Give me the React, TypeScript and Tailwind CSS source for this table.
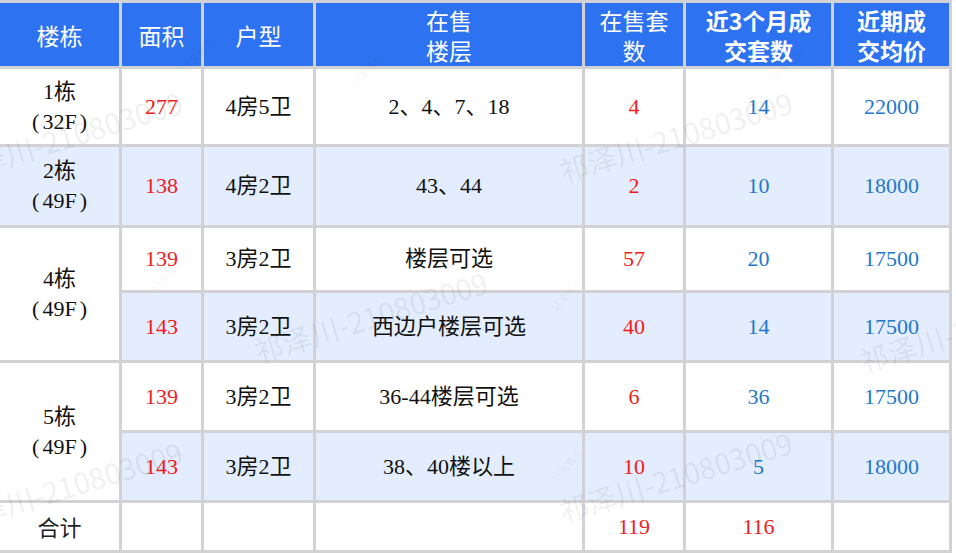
import React from 'react';

const serif = { fontFamily: '"Liberation Serif", "Noto Sans CJK SC", serif' };
const sans = { fontFamily: '"Noto Sans CJK SC", "Liberation Sans", sans-serif' };

const RED = 'text-[#f01c1c]';
const BLUE = 'text-[#1f78cc]';

type Row = {
  area: string;
  type: string;
  floors: string;
  onSale: string;
  sold: string;
  price: string;
  tint: boolean;
  h: string;
};

const Cell = ({ children, className = '' }: { children?: React.ReactNode; className?: string }) => (
  <div className={`flex items-center justify-center text-center text-[22px] leading-[30px] ${className}`} style={serif}>
    {children}
  </div>
);

const Building = ({ name, floors, span }: { name: string; floors: string; span: string }) => (
  <div className={`bg-white flex flex-col items-center justify-center text-[22px] leading-[30px] text-[#111] ${span}`} style={serif}>
    <span>{name}</span>
    <span>
      <span className="pr-[3px]">(</span>
      {floors}
      <span className="pl-[3px]">)</span>
    </span>
  </div>
);

const DataCells = ({ r }: { r: Row }) => {
  const bg = r.tint ? 'bg-[#e3edfd]' : 'bg-white';
  return (
    <>
      <Cell className={`${bg} ${RED}`}>{r.area}</Cell>
      <Cell className={`${bg} text-[#111]`}>{r.type}</Cell>
      <Cell className={`${bg} text-[#111]`}>{r.floors}</Cell>
      <Cell className={`${bg} ${RED}`}>{r.onSale}</Cell>
      <Cell className={`${bg} ${BLUE}`}>{r.sold}</Cell>
      <Cell className={`${bg} ${BLUE}`}>{r.price}</Cell>
    </>
  );
};

const Watermark = ({ x, y }: { x: number; y: number }) => (
  <div
    className="absolute pointer-events-none whitespace-nowrap text-[29px] text-black/[0.07] origin-left -rotate-[17deg]"
    style={{ ...sans, left: x, top: y }}
  >
    祁泽川-210803009
  </div>
);

const Tag = ({ x, y }: { x: number; y: number }) => (
  <div
    className="absolute pointer-events-none whitespace-nowrap text-[10px] text-black/[0.06] -rotate-45"
    style={{ ...sans, left: x, top: y }}
  >
    ⌂ 链家看房
  </div>
);

export default function App() {
  const head = 'bg-[#2d72f0] text-white flex items-center justify-center text-center text-[23px] leading-[30px]';
  return (
    <div className="relative w-[956px] h-[554px] bg-white overflow-hidden">
      <div
        className="grid gap-[3px] bg-[#d2d2d6] pt-[3px] pr-[3px] pb-[3px] w-[952px]"
        style={{
          gridTemplateColumns: '119px 79px 109px 266px 98px 145px 115px',
          gridTemplateRows: '63px 75px 78px 62px 67px 67px 67px 47px',
        }}
      >
        <div className={head} style={sans}>楼栋</div>
        <div className={head} style={sans}>面积</div>
        <div className={head} style={sans}>户型</div>
        <div className={head} style={sans}>在售<br />楼层</div>
        <div className={head} style={sans}>在售套<br />数</div>
        <div className={`${head} font-bold`} style={sans}>近3个月成<br />交套数</div>
        <div className={`${head} font-bold`} style={sans}>近期成<br />交均价</div>

        <Building name="1栋" floors="32F" span="" />
        <DataCells r={{ area: '277', type: '4房5卫', floors: '2、4、7、18', onSale: '4', sold: '14', price: '22000', tint: false, h: '' }} />

        <div className="bg-[#e3edfd] flex flex-col items-center justify-center text-[22px] leading-[30px] text-[#111]" style={serif}>
          <span>2栋</span>
          <span><span className="pr-[3px]">(</span>49F<span className="pl-[3px]">)</span></span>
        </div>
        <DataCells r={{ area: '138', type: '4房2卫', floors: '43、44', onSale: '2', sold: '10', price: '18000', tint: true, h: '' }} />

        <Building name="4栋" floors="49F" span="row-span-2" />
        <DataCells r={{ area: '139', type: '3房2卫', floors: '楼层可选', onSale: '57', sold: '20', price: '17500', tint: false, h: '' }} />
        <DataCells r={{ area: '143', type: '3房2卫', floors: '西边户楼层可选', onSale: '40', sold: '14', price: '17500', tint: true, h: '' }} />

        <Building name="5栋" floors="49F" span="row-span-2" />
        <DataCells r={{ area: '139', type: '3房2卫', floors: '36-44楼层可选', onSale: '6', sold: '36', price: '17500', tint: false, h: '' }} />
        <DataCells r={{ area: '143', type: '3房2卫', floors: '38、40楼以上', onSale: '10', sold: '5', price: '18000', tint: true, h: '' }} />

        <div className="bg-white flex items-center justify-center text-[22px] text-[#222]" style={sans}>合计</div>
        <div className="bg-white" />
        <div className="bg-white" />
        <div className="bg-white" />
        <Cell className={`bg-white ${RED}`}>119</Cell>
        <Cell className={`bg-white ${RED}`}>116</Cell>
        <div className="bg-white" />
      </div>

      <Watermark x={-50} y={150} />
      <Watermark x={560} y={150} />
      <Watermark x={255} y={330} />
      <Watermark x={860} y={340} />
      <Watermark x={-50} y={500} />
      <Watermark x={560} y={490} />

      <Tag x={170} y={50} />
      <Tag x={340} y={65} />
      <Tag x={760} y={60} />
      <Tag x={140} y={270} />
      <Tag x={540} y={290} />
      <Tag x={140} y={460} />
      <Tag x={540} y={460} />
    </div>
  );
}
